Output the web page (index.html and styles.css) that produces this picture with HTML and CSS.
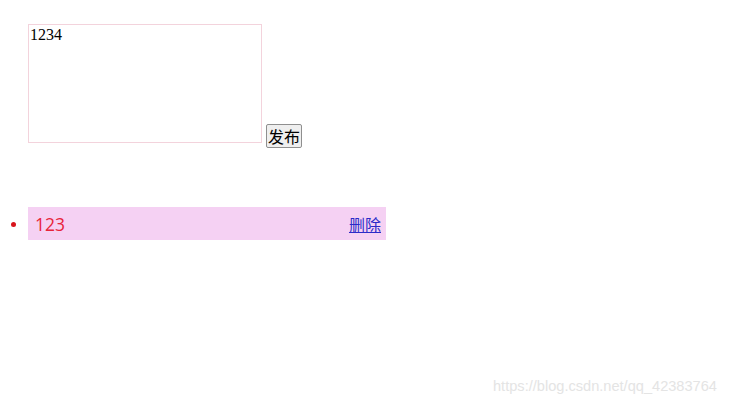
FILE: index.html
```html
<!DOCTYPE html>
<html lang="zh-CN">
<head>
<meta charset="utf-8">
<title>发布留言</title>
<link rel="stylesheet" href="styles.css">
</head>
<body>
<div class="page">
  <div class="composer">
    <textarea class="input">1234</textarea>
    <button class="publish">发布</button>
  </div>
  <ul class="list">
    <li class="item"><span class="text">123</span><a class="del" href="javascript:;">删除</a></li>
  </ul>
</div>
<div class="watermark">https://blog.csdn.net/qq_42383764</div>
</body>
</html>
```

FILE: styles.css
```css
html, body {
  margin: 0;
  padding: 0;
  background: #fff;
}
.page {
  padding: 24px 0 0 28px;
}
.composer {
  display: flex;
  align-items: flex-end;
  gap: 4px;
}
.input {
  box-sizing: border-box;
  width: 234px;
  height: 119px;
  margin: 0;
  padding: 1px 1px;
  border: 1px solid #f3d3dc;
  outline: none;
  resize: none;
  font-family: "Liberation Serif", serif;
  font-size: 16px;
  line-height: 18px;
  color: #000;
}
.publish {
  box-sizing: border-box;
  width: 36px;
  height: 24px;
  margin: 0 0 -5px 0;
  padding: 0;
  border: 1px solid #8f8f8f;
  border-radius: 2px;
  background: #efefef;
  font-family: "Noto Sans CJK SC", sans-serif;
  font-size: 16px;
  line-height: 20px;
  color: #000;
}
.list {
  margin: 64px 0 0 0;
  padding: 0;
  color: red;
  list-style: none;
}
.item {
  position: relative;
  box-sizing: border-box;
  width: 358px;
  height: 33px;
  padding: 0 5px 0 7px;
  background: #f5d1f3;
  display: flex;
  align-items: center;
  justify-content: space-between;
  font-family: "Open Sans", "Noto Sans CJK SC", sans-serif;
  font-size: 17.5px;
}
.item::before {
  content: "";
  position: absolute;
  left: -17px;
  top: 15px;
  width: 5px;
  height: 5px;
  border-radius: 50%;
  background: #d8141c;
}
.text {
  color: #e8243a;
}
.del {
  font-family: "Noto Sans CJK SC", sans-serif;
  font-size: 16px;
  color: #2b2bc8;
  text-decoration: underline;
}
.watermark {
  position: absolute;
  left: 493px;
  top: 378px;
  font-family: "Liberation Sans", Arial, sans-serif;
  font-size: 14.6px;
  color: #e4e4e4;
  white-space: nowrap;
}
```
